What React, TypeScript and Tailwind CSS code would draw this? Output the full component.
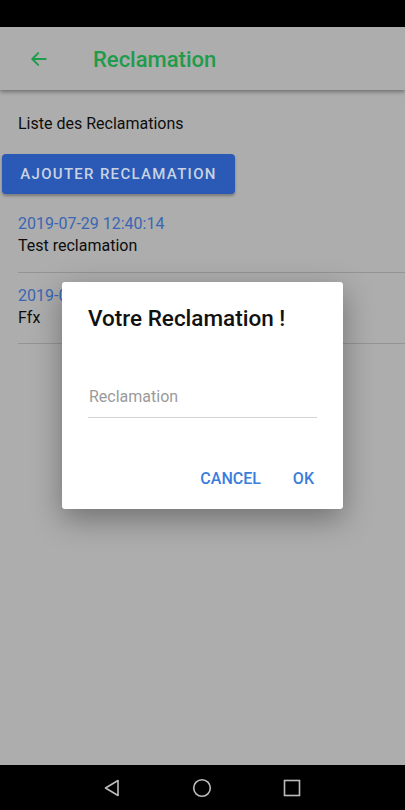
import React from "react";

export default function App() {
  return (
    <div className="relative w-[405px] h-[810px] flex flex-col overflow-hidden bg-[#adadad]" style={{ fontFamily: "Roboto, 'Liberation Sans', sans-serif" }}>
      <div className="h-[27px] bg-black shrink-0" />
      <div className="h-[63px] shrink-0 bg-[#adadad] flex items-center shadow-[0_2px_4px_rgba(0,0,0,0.35)] relative z-10">
        <div className="w-[93px] flex items-center pl-[29px]">
          <svg width="20" height="20" viewBox="0 0 24 24" fill="none" stroke="#1e9c4b" strokeWidth="2.4" strokeLinecap="round" strokeLinejoin="round">
            <path d="M20 12H4.5" />
            <path d="M11 5l-7 7 7 7" />
          </svg>
        </div>
        <span className="text-[22px] font-medium text-[#1e9c4b] leading-none mt-[2px]">Reclamation</span>
      </div>
      <div className="flex-1 flex flex-col">
        <div className="pl-[18px] pt-[24px] text-[16px] text-[#0d0d0d] leading-[20px]">Liste des Reclamations</div>
        <div className="pl-[2px] pt-[20px]">
          <div className="w-[233px] h-[40px] rounded-[4px] bg-[#2a5ab5] shadow-[0_2px_3px_rgba(0,0,0,0.3)] flex items-center justify-center text-[15px] font-medium tracking-[1.3px] text-[#c9d2e3]">
            AJOUTER RECLAMATION
          </div>
        </div>
        <div className="pl-[18px] pt-[19px]">
          <div className="text-[16px] leading-[22px] text-[#3a66b4]">2019-07-29 12:40:14</div>
          <div className="text-[16px] leading-[22px] text-[#0d0d0d]">Test reclamation</div>
          <div className="h-px bg-[#949494] mt-[15px]" />
          <div className="text-[16px] leading-[22px] text-[#3a66b4] mt-[12px]">2019-07-29 12:41:02</div>
          <div className="text-[16px] leading-[22px] text-[#0d0d0d]">Ffx</div>
          <div className="h-px bg-[#949494] mt-[14px]" />
        </div>
      </div>
      <div className="h-[45px] shrink-0 bg-black flex items-center justify-center gap-[70px] pr-[1px]">
        <svg width="20" height="20" viewBox="0 0 20 20" fill="none" stroke="#bdbdbd" strokeWidth="1.6" strokeLinejoin="round">
          <path d="M16 2.5v15L3.5 10z" />
        </svg>
        <svg width="20" height="20" viewBox="0 0 20 20" fill="none" stroke="#bdbdbd" strokeWidth="1.6">
          <circle cx="10" cy="10" r="8.3" />
        </svg>
        <svg width="20" height="20" viewBox="0 0 20 20" fill="none" stroke="#bdbdbd" strokeWidth="1.6">
          <rect x="2.5" y="2.5" width="15" height="15" />
        </svg>
      </div>

      <div className="absolute left-[62px] top-[282px] w-[281px] h-[227px] bg-white rounded-[3px] shadow-[0_10px_30px_rgba(0,0,0,0.35)] flex flex-col">
        <div className="pl-[26px] pt-[22px] text-[22.5px] font-medium text-[#111] leading-[28px]">Votre Reclamation !</div>
        <div className="mx-[26px] mt-[55px] border-b border-[#d4d4d4] pb-[11px] text-[16px] leading-[19px] text-[#9a9a9a] pl-[1px]">Reclamation</div>
        <div className="flex justify-end items-center gap-[32px] pr-[29px] mt-[51px] text-[16px] font-medium text-[#3b7ddd] leading-[20px]">
          <span>CANCEL</span>
          <span>OK</span>
        </div>
      </div>
    </div>
  );
}
